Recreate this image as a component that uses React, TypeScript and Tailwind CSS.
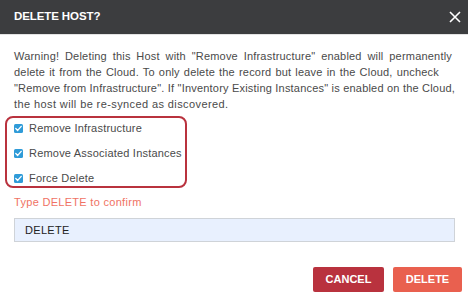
import React from "react";

function Check({ label }: { label: string }) {
  return (
    <div className="flex h-[16px] items-center">
      <svg width="9" height="9" viewBox="0 0 9 9" className="ml-[7px] shrink-0">
        <rect x="0" y="0" width="9" height="9" rx="1.5" fill="#2f9bd8" />
        <path d="M1.8 4.6 L3.7 6.4 L7.2 2.4" stroke="#fff" strokeWidth="1.4" fill="none" strokeLinecap="round" strokeLinejoin="round" />
      </svg>
      <span className="ml-[6px] text-[11px] text-[#4a4a4a] tracking-[0.2px]">{label}</span>
    </div>
  );
}

export default function App() {
  return (
    <div
      className="w-[468px] h-[300px] bg-white overflow-hidden"
      style={{ fontFamily: '"Liberation Sans", Arial, sans-serif' }}
    >
      <div className="h-[35px] bg-[#3c3d3f] border-b border-[#e3e3e3] flex items-center justify-between pl-[14px] pr-[7px]">
        <span className="text-white font-bold text-[11.5px] leading-none tracking-[-0.1px]">DELETE HOST?</span>
        <svg width="12" height="12" viewBox="0 0 12 12">
          <path d="M1 1 L11 11 M11 1 L1 11" stroke="#fff" strokeWidth="1.6" />
        </svg>
      </div>
      <div className="pt-[13px] px-[14px]">
        <div className="text-[11px] leading-[16px] text-[#4a4a4a] tracking-[0.2px]">
          <div className="w-[438px] whitespace-nowrap [text-align-last:justify]">
            Warning! Deleting this Host with "Remove Infrastructure" enabled will permanently
          </div>
          <div className="w-[425px] whitespace-nowrap [text-align-last:justify]">
            delete it from the Cloud. To only delete the record but leave in the Cloud, uncheck
          </div>
          <div className="w-[436px] whitespace-nowrap [text-align-last:justify]">
            "Remove from Infrastructure". If "Inventory Existing Instances" is enabled on the Cloud,
          </div>
          <div className="whitespace-nowrap tracking-[0.4px]">the host will be re-synced as discovered.</div>
        </div>
      </div>
      <div className="ml-[5px] mt-[4px] w-[182px] h-[72px] border-2 border-[#b9323e] rounded-[8px] pt-[2px] flex flex-col gap-[9px]">
        <Check label="Remove Infrastructure" />
        <Check label="Remove Associated Instances" />
        <Check label="Force Delete" />
      </div>
      <div className="mt-[6px] px-[14px] text-[11px] leading-[16px] text-[#f07264] tracking-[0.3px]">Type DELETE to confirm</div>
      <div className="mt-[8px] ml-[14px] w-[441px] h-[24px] border border-[#cfd3d8] bg-[#e8f0fe] flex items-center pl-[10px] text-[11px] text-[#222] tracking-[0.3px]">
        DELETE
      </div>
      <div className="mt-[25px] flex justify-end pr-[6px] gap-[9px]">
        <button className="w-[71px] h-[25px] rounded-[2px] bg-[#b9323e] text-white font-bold text-[11px]">CANCEL</button>
        <button className="w-[69px] h-[25px] rounded-[2px] bg-[#e9604f] text-white font-bold text-[11px]">DELETE</button>
      </div>
    </div>
  );
}
